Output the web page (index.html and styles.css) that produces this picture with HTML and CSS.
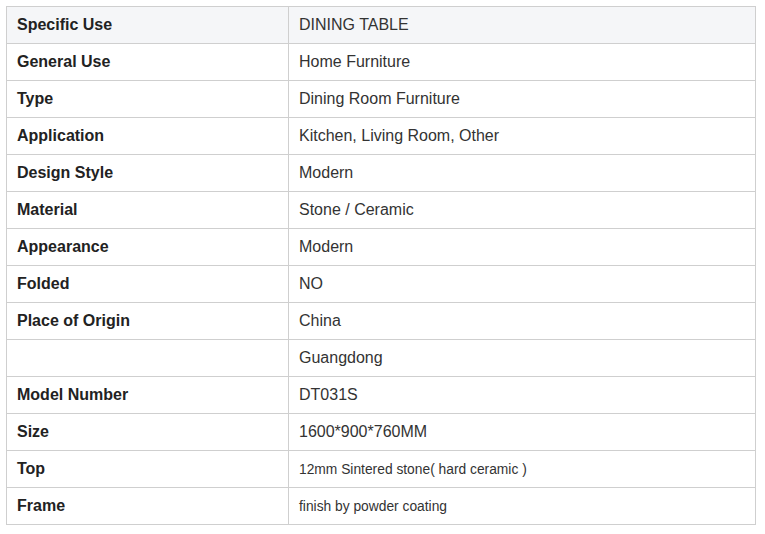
FILE: index.html
```html
<!DOCTYPE html>
<html>
<head>
<meta charset="utf-8">
<link rel="stylesheet" href="styles.css">
</head>
<body>
<table class="spec">
  <tr class="head"><td class="k">Specific Use</td><td class="v">DINING TABLE</td></tr>
  <tr><td class="k">General Use</td><td class="v">Home Furniture</td></tr>
  <tr><td class="k">Type</td><td class="v">Dining Room Furniture</td></tr>
  <tr><td class="k">Application</td><td class="v">Kitchen, Living Room, Other</td></tr>
  <tr><td class="k">Design Style</td><td class="v">Modern</td></tr>
  <tr><td class="k">Material</td><td class="v">Stone / Ceramic</td></tr>
  <tr><td class="k">Appearance</td><td class="v">Modern</td></tr>
  <tr><td class="k">Folded</td><td class="v">NO</td></tr>
  <tr><td class="k">Place of Origin</td><td class="v">China</td></tr>
  <tr><td class="k"></td><td class="v">Guangdong</td></tr>
  <tr><td class="k">Model Number</td><td class="v">DT031S</td></tr>
  <tr><td class="k">Size</td><td class="v">1600*900*760MM</td></tr>
  <tr><td class="k">Top</td><td class="v small">12mm Sintered stone( hard ceramic )</td></tr>
  <tr><td class="k">Frame</td><td class="v small">finish by powder coating</td></tr>
</table>
</body>
</html>
```
FILE: styles.css
```css
html, body {
  margin: 0;
  padding: 0;
  background: #fff;
}
body {
  padding: 6px;
  font-family: "Liberation Sans", Arial, sans-serif;
}
.spec {
  border-collapse: collapse;
  width: 750px;
  table-layout: fixed;
}
.spec td {
  border: 1px solid #cfcfcf;
  height: 37px;
  padding: 0 10px;
  box-sizing: border-box;
  vertical-align: middle;
  font-size: 16px;
  color: #333;
}
.spec .k {
  width: 282px;
  font-weight: bold;
  color: #222;
}
.spec .v.small {
  font-size: 13.8px;
}
.spec .head td {
  background: #f5f6f8;
}
```
